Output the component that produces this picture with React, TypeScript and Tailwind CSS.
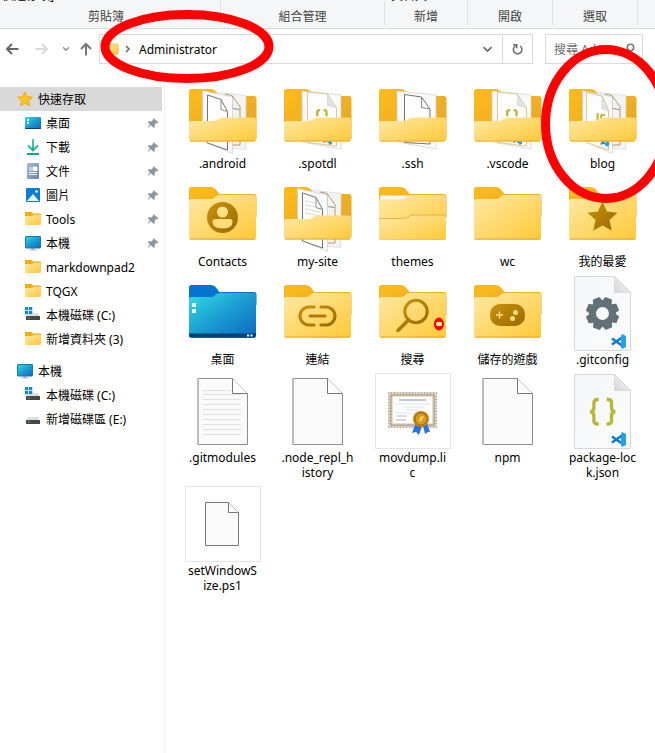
import React from "react";

const PAPER_EDGE = "#8b8b8b";

function Gradients() {
  return (
    <svg className="absolute size-0" aria-hidden="true">
      <defs>
        <linearGradient id="front" x1="0" y1="0" x2="1" y2="1">
          <stop offset="0" stopColor="#ffe9a6" />
          <stop offset="1" stopColor="#ffc937" />
        </linearGradient>
        <linearGradient id="back" x1="0" y1="0" x2="1" y2="1">
          <stop offset="0" stopColor="#fdbb1a" />
          <stop offset="1" stopColor="#e3a62b" />
        </linearGradient>
        <linearGradient id="brown" x1="0" y1="0" x2="1" y2="1">
          <stop offset="0" stopColor="#c8930c" />
          <stop offset="1" stopColor="#9a6a02" />
        </linearGradient>
        <linearGradient id="blue" x1="0" y1="0" x2="1" y2="1">
          <stop offset="0" stopColor="#35dbe6" />
          <stop offset="0.5" stopColor="#1a9cd2" />
          <stop offset="1" stopColor="#0b66bf" />
        </linearGradient>
        <linearGradient id="page" x1="0" y1="0" x2="1" y2="1">
          <stop offset="0" stopColor="#f4f6f8" />
          <stop offset="1" stopColor="#fbfbfb" />
        </linearGradient>
        <linearGradient id="fold" x1="0" y1="1" x2="1" y2="0">
          <stop offset="0" stopColor="#d6d6d6" />
          <stop offset="1" stopColor="#fafafa" />
        </linearGradient>
        <linearGradient id="green" x1="0" y1="0" x2="0" y2="1">
          <stop offset="0" stopColor="#2fc9a0" />
          <stop offset="1" stopColor="#10a58a" />
        </linearGradient>
        <linearGradient id="doc" x1="0" y1="0" x2="1" y2="1">
          <stop offset="0" stopColor="#aabbd0" />
          <stop offset="1" stopColor="#6484aa" />
        </linearGradient>
      </defs>
    </svg>
  );
}

function Big({ children }: { children: React.ReactNode }) {
  return (
    <svg viewBox="0 0 76 76" className="size-[76px]" aria-hidden="true">
      {children}
    </svg>
  );
}

function ClosedFolder({ children }: { children?: React.ReactNode }) {
  return (
    <Big>
      <path d="M4 12.500q0-2.500 2.500-2.500h19q3 0 5 2l4 5h34q3 0 3 3v20H4z" fill="url(#back)" />
      <path d="M4 24.500q0-2.500 2.500-2.500h19q3 0 4-1.500l2-1.500q1-1 3-1h34q2.500 0 2.500 2.500v40q0 2.500-2.500 2.500h-62q-2.500 0-2.500-2.500z" fill="url(#front)" />
      <path d="M5 62h65" stroke="#e0ac35" />
      {children}
    </Big>
  );
}

type Paper = "double" | "lined" | "single" | "json" | "script";

function BackSheet() {
  return (
    <>
      <path d="M32 13l29 3.500v54l-29-2z" fill="#f3f3f3" stroke="#d2d2d2" strokeWidth="0.600" />
      <path d="M40 15l7 1.500 8 11V66l-8 0" fill="none" stroke="#b29a6a" strokeWidth="1" />
      <path d="M47.500 17v12.500l7 1" fill="none" stroke="#8b8b8b" strokeWidth="1" />
    </>
  );
}

function Braces({ x, y, size }: { x: number; y: number; size: number }) {
  return (
    <g transform={`translate(${x} ${y}) scale(${size})`} fill="none" stroke="#b8b73c" strokeWidth="3.400">
      <path d="M10 1.500H8.500Q5 1.500 5 5v5q0 4-4 4 4 0 4 4v5q0 3.500 3.500 3.500H10" />
      <path d="M18 1.500h1.500Q23 1.500 23 5v5q0 4 4 4-4 0-4 4v5q0 3.500-3.500 3.500H18" />
    </g>
  );
}

function CodeMark({ x, y, size }: { x: number; y: number; size: number }) {
  return (
    <g transform={`translate(${x} ${y}) scale(${size})`}>
      <path d="M1 4.500l10 7M1 10.500l10-7" stroke="#0f7ac6" strokeWidth="2.500" />
      <path d="M11 0l4 2v11l-4 2-1-2V2z" fill="#23a1ec" />
    </g>
  );
}

function OpenFolder({ paper }: { paper: Paper }) {
  const doubled = paper === "double" || paper === "lined" || paper === "script";
  return (
    <Big>
      <path d="M4 12.500q0-2.500 2.500-2.500h19q3 0 5 2l4 5h34q3 0 3 3v40H4z" fill="url(#back)" />
      {doubled && <BackSheet />}
      {doubled ? (
        <path d="M17.500 11.500l30 6.500v56.500l-30-13z" fill="#fafafa" stroke="#cfcfcf" strokeWidth="0.700" />
      ) : (
        <path d="M22 12l39 4v54l-39-7z" fill="#fafafa" stroke="#cfcfcf" strokeWidth="0.700" />
      )}
      {(paper === "double" || paper === "lined") && (
        <>
          <path d="M22.500 64V16l13.500 4.500 6.500 12V71z" fill="#fdfdfd" stroke="#77736b" strokeWidth="1" />
          <path d="M36 20.500v10l6.500 2" fill="none" stroke="#8b8b8b" />
        </>
      )}
      {paper === "lined" && <path d="M25 24l10 2M25 28l10 2M25 32l15 3M25 36l15 3" stroke="#d8d8d8" />}
      {paper === "single" && (
        <>
          <path d="M29.500 63.500V15.500l17 2.500 8.500 12v35z" fill="#fdfdfd" stroke="#77736b" strokeWidth="1" />
          <path d="M46.500 18v10.500l8.500 1.500" fill="none" stroke="#8b8b8b" />
        </>
      )}
      {paper === "json" && (
        <>
          <path d="M27.500 63.500V13l20 2 9 14v38z" fill="#fdfdfd" stroke="#dfc78e" />
          <path d="M47.500 15.500v11l8.500 2z" fill="url(#fold)" stroke="#c8c8c8" strokeWidth="0.500" />
          <g transform="translate(36 30) scale(0.420)" fill="none" stroke="#b8b73c" strokeWidth="5.500">
            <path d="M10 2.500H8.500Q3 2.500 3 7v10" />
            <path d="M18 2.500h1.500Q25 2.500 25 7v10" />
          </g>
          <CodeMark x={43} y={57} size={0.6} />
        </>
      )}
      {paper === "script" && (
        <>
          <path d="M21.500 63.500V13l16 4.500 6 14V71z" fill="#fdfdfd" stroke="#dfc78e" />
          <path d="M37 18v12l6 2z" fill="url(#fold)" stroke="#c8c8c8" strokeWidth="0.500" />
          <path d="M32.500 34v8M40 36.500q-4-2-4 1t4 4" fill="none" stroke="#b8b73c" strokeWidth="2" />
          <CodeMark x={35} y={59} size={0.6} />
        </>
      )}
      <path d="M4 44q0-2 2.500-2h22q2 0 4-1.500l2-1q1-1 4-1h30q2.500 0 2.500 2.500v18.500q0 3-2.500 3h-62q-2.500 0-2.500-3z" fill="url(#front)" />
      <path d="M5 62h65" stroke="#e0ac35" />
    </Big>
  );
}

function PlainPage({ lines = false }: { lines?: boolean }) {
  return (
    <Big>
      <path d="M13.500 5.500h34l15 15v51h-49z" fill="#fafafa" stroke={PAPER_EDGE} />
      <path d="M13 5v67" stroke="#bdbdbd" strokeWidth="2" />
      <path d="M47.500 5.500v15h15" fill="#fff" stroke="#777" />
      {lines && <path d="M18 17.500h28M18 21.500h38M18 26.500h38M18 31.500h38M18 36.500h38M18 41.500h38M18 46.500h38M18 51.500h38M18 56.500h38M18 61.500h38" stroke="#e0e0e0" />}
    </Big>
  );
}

function CodePage({ children }: { children: React.ReactNode }) {
  return (
    <Big>
      <path d="M9.500 1.500h40l16 16v58h-56z" fill="url(#page)" stroke="#d4d8da" />
      <path d="M49.500 1.500v16h16z" fill="url(#fold)" stroke="#c5c8ca" strokeWidth="0.500" />
      {children}
      <CodeMark x={46} y={59} size={1} />
    </Big>
  );
}

const teeth = [22, 67, 112, 157, 202, 247, 292, 337];

function DesktopBig() {
  return (
    <Big>
      <path d="M4 12.500q0-2.500 2.500-2.500h19q3 0 5 2l4 5h34q3 0 3 3v10H4z" fill="#0873ce" />
      <path d="M4 24.500q0-2.500 2.500-2.500h19q3 0 4-1.500l2-1.500q1-1 3-1h34q2.500 0 2.500 2.500v40q0 2.500-2.500 2.500h-62q-2.500 0-2.500-2.500z" fill="url(#blue)" />
      <path d="M4 58.500h67v1.500q0 2.500-2.500 2.500h-62Q4 62.500 4 60z" fill="#0b416c" />
      <path d="M7 28h4v4H7zM7 34h4v4H7zM62 59.500h2v2h-2zM65.500 59.500h2v2h-2z" fill="#eefaff" />
    </Big>
  );
}

function Certificate() {
  return (
    <svg viewBox="0 0 76 76" className="size-[76px] outline outline-1 -outline-offset-1 outline-[#e5e5e5]" aria-hidden="true">
      <path d="M13 19h49v36H13z" fill="#b9aea0" />
      <path d="M14 20h47v34H14z" fill="none" stroke="#e1dacb" strokeWidth="2" strokeDasharray="2 1" />
      <path d="M17 23h41v28H17z" fill="#fdfdfb" stroke="#cfc2a6" />
      <path d="M24 27h27" stroke="#aab6da" strokeWidth="1.500" />
      <path d="M20 31h35M27 34h21M31 37h13M20 40h17" stroke="#e0e4ef" />
      <path d="M22 43h10M21 47h10" stroke="#a9b7cd" />
      <path d="M40 52l-3 8 4-1 3 3 3-9zM48 53l2 8 3-2 2 0-3-9z" fill="#2871e8" />
      <circle cx="46" cy="46" r="8" fill="#bd8516" />
      <circle cx="46" cy="46" r="6" fill="#d99b1c" stroke="#a56d08" />
      <path d="M44 49l1-5 4-1-2 4z" fill="#f8d56b" />
    </svg>
  );
}

function SmallPage() {
  return (
    <svg viewBox="0 0 76 76" className="size-[76px] outline outline-1 -outline-offset-1 outline-[#e5e5e5]" aria-hidden="true">
      <path d="M20.500 16.500h23l10 10v33h-33z" fill="#fafafa" stroke="#777" />
      <path d="M43.500 16.500v10h10" fill="#fff" stroke="#777" />
    </svg>
  );
}

const files: { name: string; icon: React.ReactNode }[] = [
  { name: ".android", icon: <OpenFolder paper="double" /> },
  { name: ".spotdl", icon: <OpenFolder paper="json" /> },
  { name: ".ssh", icon: <OpenFolder paper="single" /> },
  { name: ".vscode", icon: <OpenFolder paper="json" /> },
  { name: "blog", icon: <OpenFolder paper="script" /> },
  {
    name: "Contacts",
    icon: (
      <ClosedFolder>
        <circle cx="37.500" cy="40.500" r="15.500" fill="url(#brown)" />
        <circle cx="37.500" cy="35" r="5.500" fill="#ffe08a" />
        <path d="M30 42h15q2.500 0 2.500 2.500 0 7-10 7t-10-7q0-2.500 2.500-2.500z" fill="#ffdc7c" />
      </ClosedFolder>
    ),
  },
  { name: "my-site", icon: <OpenFolder paper="lined" /> },
  {
    name: "themes",
    icon: (
      <ClosedFolder>
        <path d="M5 22V20q0-1.500 2-1.500h26l-4 3q-2 1-5 1H7q-2 0-2 1z" fill="#f4f7fa" />
        <path d="M4 44q0-2 2.500-2h22q2 0 4-1.500l2-1q1-1 4-1h30q2.500 0 2.500 2.500v18.500q0 3-2.500 3h-62q-2.500 0-2.500-3z" fill="url(#front)" />
        <path d="M4 42.500q1-1 2.500-1h22q2 0 4-1.500l2-1q1-1 4-1h30q2.500 0 2.500 2" fill="none" stroke="#e3b64c" />
      </ClosedFolder>
    ),
  },
  { name: "wc", icon: <ClosedFolder /> },
  {
    name: "我的最愛",
    icon: (
      <ClosedFolder>
        <path d="M37.500 24.500l4.500 10 10.500 1.200-8 7.200 2.200 10.600-9.200-5-9.200 5 2.200-10.600-8-7.200 10.500-1.200z" fill="url(#brown)" />
      </ClosedFolder>
    ),
  },
  { name: "桌面", icon: <DesktopBig /> },
  {
    name: "連結",
    icon: (
      <ClosedFolder>
        <path d="M34 32h-5a9 9 0 0 0 0 18h5M41 32h5a9 9 0 0 1 0 18h-5" fill="none" stroke="url(#brown)" strokeWidth="3.200" strokeLinecap="round" />
        <path d="M30 39.500h15q1.500 0 1.500 1.500t-1.500 1.500H30q-1.500 0-1.500-1.500t1.500-1.500z" fill="#b17d08" />
      </ClosedFolder>
    ),
  },
  {
    name: "搜尋",
    icon: (
      <ClosedFolder>
        <circle cx="41" cy="36.500" r="11.200" fill="none" stroke="url(#brown)" strokeWidth="3" />
        <path d="M33.500 45L23 55.500" stroke="#ad7b0b" strokeWidth="3.500" strokeLinecap="round" />
        <ellipse cx="64" cy="49" rx="5" ry="6.500" fill="#f00" />
        <ellipse cx="64" cy="49" rx="3" ry="2.200" fill="#ffeab0" />
      </ClosedFolder>
    ),
  },
  {
    name: "儲存的遊戲",
    icon: (
      <ClosedFolder>
        <rect x="20" y="29" width="35" height="22" rx="10" fill="url(#brown)" />
        <path d="M29.500 36.500v7M26 40h7" stroke="#ffdd83" strokeWidth="1.500" />
        <circle cx="45.500" cy="37.500" r="2.500" fill="#ffdd83" />
        <circle cx="42.500" cy="43.500" r="2.500" fill="#ffdd83" />
      </ClosedFolder>
    ),
  },
  {
    name: ".gitconfig",
    icon: (
      <CodePage>
        {teeth.map((angle) => (
          <path key={angle} d="M33 25l1-3h7l1 3v5h-9z" transform={`rotate(${angle} 37.500 38.500)`} fill="#637177" />
        ))}
        <circle cx="37.500" cy="38.500" r="10" fill="none" stroke="#637177" strokeWidth="7" />
      </CodePage>
    ),
  },
  { name: ".gitmodules", icon: <PlainPage lines /> },
  { name: ".node_repl_h\nistory", icon: <PlainPage /> },
  { name: "movdump.li\nc", icon: <Certificate /> },
  { name: "npm", icon: <PlainPage /> },
  {
    name: "package-loc\nk.json",
    icon: (
      <CodePage>
        <Braces x={24} y={25} size={0.98} />
      </CodePage>
    ),
  },
  { name: "setWindowS\nize.ps1", icon: <SmallPage /> },
];

type SmallKind = "desktop" | "download" | "document" | "picture" | "folder" | "pc" | "windisk" | "disk" | "star";

function SmallIcon({ kind }: { kind: SmallKind }) {
  return (
    <svg viewBox="0 0 16 16" className="size-4 shrink-0" aria-hidden="true">
      {kind === "star" && <path d="M8 1l2 4.600 5 .6-3.700 3.400 1 5L8 12.200l-4.300 2.400 1-5L1 6.200l5-.6z" fill="#ffc420" stroke="#f3ae1b" strokeWidth="1.200" strokeLinejoin="round" />}
      {kind === "desktop" && (
        <>
          <rect y="2" width="16" height="12" rx="1" fill="url(#blue)" />
          <path d="M0 13h16q0 1-1 1H1q-1 0-1-1z" fill="#0b416c" />
          <path d="M2 4h2v2H2zM2 7h2v2H2z" fill="#e8fbff" />
        </>
      )}
      {kind === "download" && <path d="M8 0v11M3 6.500l5 5 5-5M2 15h12" fill="none" stroke="url(#green)" strokeWidth="1.800" />}
      {kind === "document" && (
        <>
          <rect x="2" y="0" width="12" height="16" rx="1" fill="url(#doc)" />
          <path d="M4 5h3M4 7h3M4 9.500h8M4 11.500h8M8 4h4v3.500H8z" fill="#fff" stroke="#fff" strokeWidth="0.900" />
        </>
      )}
      {kind === "picture" && (
        <>
          <rect x="1" y="1" width="14" height="14" rx="1" fill="#0c7dd2" />
          <path d="M2 14l6-7 6 7z" fill="#eef9ff" />
          <circle cx="11.500" cy="4.500" r="1.300" fill="#fff" />
        </>
      )}
      {kind === "folder" && (
        <>
          <path d="M0 2q0-1 1-1h5.500l1.500 1.500h7q1 0 1 1v5H0z" fill="#f4ac08" />
          <path d="M0 6q0-1 1-1h6l1-1.200h7q1 0 1 1V13q0 1-1 1H1q-1 0-1-1z" fill="url(#front)" />
        </>
      )}
      {kind === "pc" && (
        <>
          <path d="M6.500 13h3v2h-3zM4 14.500h8v1H4z" fill="#b4bdc3" />
          <rect x="0.500" y="1.500" width="15" height="11.500" rx="0.500" fill="url(#blue)" stroke="#1876aa" />
        </>
      )}
      {(kind === "windisk" || kind === "disk") && (
        <>
          <path d="M3 6h10l2 4H1z" fill="#dedede" />
          <rect x="1" y="9" width="14" height="4" rx="0.500" fill="#474747" />
          <path d="M3 11h1.500" stroke="#4de65a" strokeWidth="1.200" />
        </>
      )}
      {kind === "windisk" && (
        <>
          <path d="M0 0h8v7.500H0z" fill="#fff" />
          <path d="M0 0h3.300v3.300H0zM4 0h3.300v3.300H4zM0 4h3.300v3.300H0zM4 4h3.300v3.300H4z" fill="#0b88df" />
        </>
      )}
    </svg>
  );
}

function Pin() {
  return (
    <svg viewBox="0 0 12 12" className="ml-auto size-3" aria-hidden="true">
      <path d="M6.500 1l5 4.500-1.300.7-.8-.3-1.800 1.900.2 2.200-1 1L4 8.200.8 11.200 1 10l2-2.500L.8 5.200l1-1 2.400.2L6.200 2.500z" fill="#8a98a3" />
    </svg>
  );
}

const quick: { name: string; kind: SmallKind; pinned?: boolean }[] = [
  { name: "桌面", kind: "desktop", pinned: true },
  { name: "下載", kind: "download", pinned: true },
  { name: "文件", kind: "document", pinned: true },
  { name: "圖片", kind: "picture", pinned: true },
  { name: "Tools", kind: "folder", pinned: true },
  { name: "本機", kind: "pc", pinned: true },
  { name: "markdownpad2", kind: "folder" },
  { name: "TQGX", kind: "folder" },
  { name: "本機磁碟 (C:)", kind: "windisk" },
  { name: "新增資料夾 (3)", kind: "folder" },
];

const drives: { name: string; kind: SmallKind }[] = [
  { name: "本機磁碟 (C:)", kind: "windisk" },
  { name: "新增磁碟區 (E:)", kind: "disk" },
];

function TreeItem({ name, kind, pinned, root, selected }: { name: string; kind: SmallKind; pinned?: boolean; root?: boolean; selected?: boolean }) {
  return (
    <li className={selected ? "mr-[2px] bg-[#d9d9d9]" : "mr-[2px]"}>
      <button type="button" className={`flex h-6 w-full items-center gap-[5px] pr-[3px] text-left whitespace-nowrap ${root ? "pl-[17px]" : "pl-[25px]"}`}>
        <SmallIcon kind={kind} />
        {name}
        {pinned && <Pin />}
      </button>
    </li>
  );
}

function RibbonGroup({ label, above, className }: { label: string; above?: string; className: string }) {
  return (
    <div className={`flex h-[25px] flex-col border-r border-[#dfe1e3] ${className}`}>
      <div className="flex h-1 items-end pl-[6px] leading-4 text-black">{above}</div>
      <div className="pt-[5px] text-center leading-4">{label}</div>
    </div>
  );
}

function NavButton({ label, className, path, color, size }: { label: string; className: string; path: string; color: string; size: string }) {
  return (
    <button type="button" aria-label={label} className={`flex h-[30px] items-center justify-center ${className}`}>
      <svg viewBox="0 0 14 14" className={size} fill="none" stroke={color} strokeWidth="2" aria-hidden="true">
        <path d={path} />
      </svg>
    </button>
  );
}

export default function App() {
  return (
    <div className="relative min-h-screen overflow-hidden bg-white font-['Noto_Sans','Noto_Sans_CJK_TC',sans-serif] text-[12px] leading-[15px] text-black">
      <Gradients />
      <div className="flex h-[29px] border-b border-[#d9dadb] bg-[#f5f6f7] text-[#444]">
        <RibbonGroup label="剪貼簿" above="快速存取]" className="-ml-1 w-[225px] pr-1" />
        <RibbonGroup label="組合管理" className="w-[164px]" />
        <RibbonGroup label="新增" above="資料夾" className="w-[83px]" />
        <RibbonGroup label="開啟" className="w-[85px]" />
        <RibbonGroup label="選取" className="w-[85px]" />
      </div>

      <div className="flex h-[50px] items-start pt-[5px] pr-3">
        <NavButton label="Back" className="w-6" size="size-[14px]" color="#666" path="M13.500 7H2M7 2L2 7l5 5" />
        <NavButton label="Forward" className="w-9" size="size-[14px]" color="#d9d9d9" path="M0.500 7H12M7 2l5 5-5 5" />
        <NavButton label="Recent" className="w-3" size="size-[8px]" color="#777" path="M2 4l5 5 5-5" />
        <NavButton label="Up" className="w-[27px]" size="size-[14px]" color="#777" path="M7 13.500V2M2 7l5-5 5 5" />
        <div className="flex h-[30px] flex-1 items-center border border-[#d9d9d9]">
          <svg viewBox="0 0 16 16" className="ml-1 size-4" aria-hidden="true">
            <path d="M0 3h13q1 0 1 1v9H0z" fill="url(#front)" stroke="#f0bd47" />
          </svg>
          <svg viewBox="0 0 8 8" className="ml-1 size-2" fill="none" stroke="#666" strokeWidth="1.500" aria-hidden="true">
            <path d="M2 1l3 3-3 3" />
          </svg>
          <span className="ml-[7px] flex-1">Administrator</span>
          <NavButton label="History" className="w-[29px]" size="size-[11px]" color="#666" path="M2 4l5 5 5-5" />
          <button type="button" aria-label="Refresh" className="flex h-[28px] w-[30px] items-center justify-center border-l border-[#d9d9d9]">
            <svg viewBox="0 0 14 14" className="size-3" fill="none" stroke="#666" strokeWidth="1.700" aria-hidden="true">
              <path d="M9.500 3.500A5 5 0 1 1 4 3.300M1.500 2h4v4" />
            </svg>
          </button>
        </div>
        <label className="ml-3 flex h-[30px] w-[98px] items-center border border-[#d9d9d9] pr-[7px] pl-2">
          <input type="text" aria-label="搜尋 Administrator" placeholder="搜尋 Ad..." className="min-w-0 flex-1 outline-none placeholder:text-[#6d6d6d]" />
          <svg viewBox="0 0 12 12" className="size-3" fill="none" stroke="#777" strokeWidth="1.600" aria-hidden="true">
            <circle cx="7.500" cy="4.500" r="3.200" />
            <path d="M5 7l-4 4" />
          </svg>
        </label>
      </div>

      <div className="flex min-h-[674px]">
        <nav className="w-[165px] shrink-0 border-r border-[#f1f1f1] pt-2">
          <ul>
            <TreeItem name="快速存取" kind="star" root selected />
            {quick.map((item) => (
              <TreeItem key={item.name} {...item} />
            ))}
          </ul>
          <ul className="pt-2">
            <TreeItem name="本機" kind="pc" root />
            {drives.map((item) => (
              <TreeItem key={item.name} {...item} />
            ))}
          </ul>
        </nav>
        <main className="grid flex-1 grid-cols-[repeat(auto-fill,95px)] content-start gap-y-[6px] pl-[10px]">
          {files.map((file) => (
            <figure key={file.name} className="flex flex-col items-center">
              {file.icon}
              <figcaption className="pt-px text-center whitespace-pre">{file.name}</figcaption>
            </figure>
          ))}
        </main>
      </div>

      <svg className="pointer-events-none absolute top-0 left-0 h-[210px] w-[680px]" viewBox="0 0 680 210" fill="none" stroke="#f00" strokeWidth="9" aria-hidden="true">
        <ellipse cx="187" cy="46.500" rx="82" ry="32" />
        <ellipse cx="606" cy="124" rx="60.500" ry="74.500" />
      </svg>
    </div>
  );
}
